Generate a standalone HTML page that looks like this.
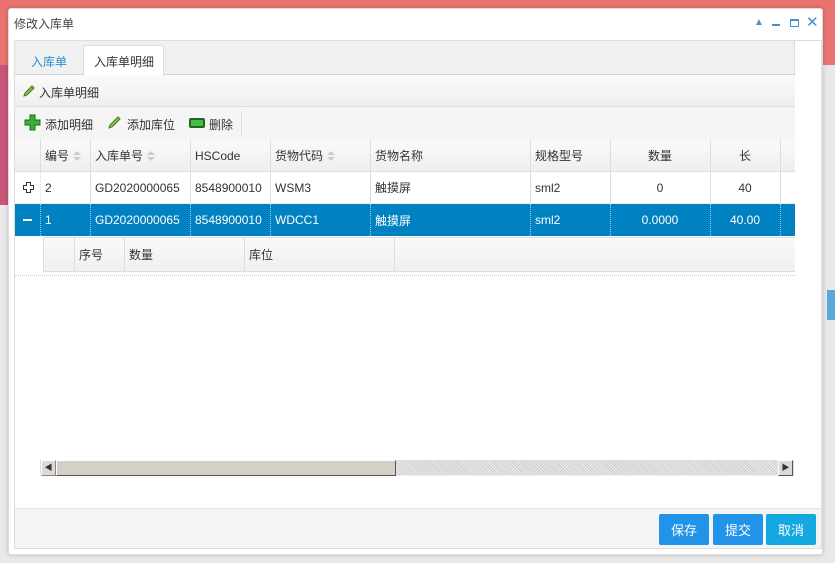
<!DOCTYPE html>
<html><head><meta charset="utf-8"><style>
*{box-sizing:border-box;margin:0;padding:0}
body{width:835px;height:563px;overflow:hidden;position:relative;background:#e9e9e9;font-family:"Liberation Sans","Noto Sans CJK SC",sans-serif;font-size:12px;color:#333}
.abs{position:absolute}
.hd{background:linear-gradient(#fafafa,#efefef)}
.cell{position:absolute;top:0;height:100%;border-right:1px solid #ddd;padding-left:5px;display:flex;align-items:center}
.sel .cell{border-right:1px dotted #9cc8e6;color:#fff}
.sort{display:inline-block;margin-left:4px;width:8px;height:10px;position:relative}
.sort:before,.sort:after{content:"";position:absolute;left:0;border-left:4px solid transparent;border-right:4px solid transparent}
.sort:before{top:0;border-bottom:4px solid #ccc}
.sort:after{top:6px;border-top:4px solid #ccc}
.btn{position:absolute;top:514px;width:50px;height:31px;color:#fff;font-size:13px;display:flex;align-items:center;justify-content:center;border-radius:2px}
</style></head><body>
<div class="abs" style="left:0;top:0;width:835px;height:65px;background:#e8736f"></div>
<div class="abs" style="left:0;top:65px;width:8px;height:140px;background:#c9567a"></div>
<div class="abs" style="left:827px;top:290px;width:8px;height:30px;background:#5aa7d8"></div>
<!-- dialog -->
<div class="abs" style="left:8px;top:8px;width:815px;height:547px;background:#fff;border:1px solid #ddd;border-radius:3px;box-shadow:0 0 4px rgba(0,0,0,.2)"></div>
<div class="abs" style="left:14px;top:15px;font-size:12px;color:#444">修改入库单</div>
<div class="abs" style="left:754px;top:17px;color:#4a90c8;font-size:10px">▲</div>
<div class="abs" style="left:772px;top:24px;width:8px;height:2px;background:#4a90c8"></div>
<div class="abs" style="left:790px;top:19px;width:9px;height:8px;border:1px solid #4a90c8;border-top-width:2px"></div>
<div class="abs" style="left:806px;top:13px;color:#4a90c8;font-size:15px">✕</div>
<!-- panel -->
<div class="abs" style="left:14px;top:40px;width:808px;height:509px;border:1px solid #ddd;background:#fff"></div>
<div class="abs" style="left:15px;top:41px;width:780px;height:34px;background:#f0f0f0;border-bottom:1px solid #d4d4d4;border-right:1px solid #ddd"></div>
<div class="abs" style="left:31px;top:53px;color:#2a8fd0">入库单</div>
<div class="abs" style="left:83px;top:45px;width:81px;height:31px;background:#fff;border:1px solid #ddd;border-bottom:none;border-radius:3px 3px 0 0;padding:7px 0 0 10px;color:#333">入库单明细</div>
<div class="abs hd" style="left:15px;top:76px;width:780px;height:31px;border-bottom:1px solid #ddd"></div>
<svg class="abs" style="left:22px;top:84px" width="14" height="14"><path d="M2 12 L3 9 L10 2 L12 4 L5 11 Z" fill="#8bc34a" stroke="#3a7a1a"/></svg>
<div class="abs" style="left:39px;top:84px">入库单明细</div>
<div class="abs" style="left:15px;top:107px;width:780px;height:33px;background:#f5f5f5"></div>
<svg class="abs" style="left:24px;top:114px" width="17" height="17"><path d="M6 1h5v5h5v5h-5v5h-5v-5h-5v-5h5z" fill="#3cb034" stroke="#1d6b1a"/></svg>
<div class="abs" style="left:45px;top:116px">添加明细</div>
<svg class="abs" style="left:107px;top:115px" width="15" height="15"><path d="M2 13 L3 10 L11 2 L13 4 L5 12 Z" fill="#8bc34a" stroke="#3a7a1a"/></svg>
<div class="abs" style="left:127px;top:116px">添加库位</div>
<div class="abs" style="left:189px;top:118px;width:16px;height:10px;border:2px solid #1d6b1a;border-radius:2px;background:#4cb848"></div>
<div class="abs" style="left:209px;top:116px">删除</div>
<div class="abs" style="left:241px;top:111px;width:1px;height:25px;background:#ddd"></div>
<!-- grid header -->
<div class="abs hd" style="left:15px;top:140px;width:780px;height:32px;border-bottom:1px solid #ddd">
<div class="cell" style="left:0;width:26px"></div>
<div class="cell" style="left:25px;width:51px">编号<span class="sort"></span></div>
<div class="cell" style="left:75px;width:101px">入库单号<span class="sort"></span></div>
<div class="cell" style="left:175px;width:81px">HSCode</div>
<div class="cell" style="left:255px;width:101px">货物代码<span class="sort"></span></div>
<div class="cell" style="left:355px;width:161px">货物名称</div>
<div class="cell" style="left:515px;width:81px">规格型号</div>
<div class="cell" style="left:595px;width:101px;justify-content:center;padding:0">数量</div>
<div class="cell" style="left:695px;width:71px;justify-content:center;padding:0">长</div>
</div>
<div class="abs" style="left:15px;top:172px;width:780px;height:32px;background:#fff;border-bottom:1px solid #eee">
<div class="cell" style="left:0;width:26px;padding-left:8px;border-right:1px dotted #ddd"><svg width="11" height="11"><path d="M3.5 0.5h4v3h3v4h-3v3h-4v-3h-3v-4h3z" fill="none" stroke="#333"/></svg></div>
<div class="cell" style="left:25px;width:51px">2</div>
<div class="cell" style="left:75px;width:101px">GD2020000065</div>
<div class="cell" style="left:175px;width:81px">8548900010</div>
<div class="cell" style="left:255px;width:101px">WSM3</div>
<div class="cell" style="left:355px;width:161px">触摸屏</div>
<div class="cell" style="left:515px;width:81px">sml2</div>
<div class="cell" style="left:595px;width:101px;justify-content:center;padding:0">0</div>
<div class="cell" style="left:695px;width:71px;justify-content:center;padding:0">40</div>
</div>
<div class="abs sel" style="left:15px;top:204px;width:780px;height:32px;background:#0081c2">
<div class="cell" style="left:0;width:26px;padding-left:8px"><span style="display:inline-block;width:9px;height:2px;background:#fff"></span></div>
<div class="cell" style="left:25px;width:51px">1</div>
<div class="cell" style="left:75px;width:101px">GD2020000065</div>
<div class="cell" style="left:175px;width:81px">8548900010</div>
<div class="cell" style="left:255px;width:101px">WDCC1</div>
<div class="cell" style="left:355px;width:161px">触摸屏</div>
<div class="cell" style="left:515px;width:81px">sml2</div>
<div class="cell" style="left:595px;width:101px;justify-content:center;padding:0">0.0000</div>
<div class="cell" style="left:695px;width:71px;justify-content:center;padding:0">40.00</div>
</div>
<div class="abs hd" style="left:43px;top:237px;width:752px;height:35px;border:1px solid #ddd;border-right:none">
<div class="cell" style="left:0;width:31px"></div>
<div class="cell" style="left:30px;width:51px">序号</div>
<div class="cell" style="left:80px;width:121px">数量</div>
<div class="cell" style="left:200px;width:151px">库位</div>
</div>
<div class="abs" style="left:15px;top:275px;width:780px;border-top:1px dotted #ccc"></div>
<!-- scrollbar -->
<div class="abs" style="left:40px;top:460px;width:754px;height:16px;background:repeating-linear-gradient(45deg,#ccc 0 1px,#eee 1px 2px);border-bottom:1px solid #eee"></div>
<div class="abs" style="left:41px;top:460px;width:15px;height:16px;background:#ddd9d4;border:1px solid #888;border-top-color:#fff;border-left-color:#fff;font-size:8px;line-height:14px;text-align:center">◀</div>
<div class="abs" style="left:56px;top:460px;width:340px;height:16px;background:#d4d0c8;border:1px solid #555;border-top-color:#fff;border-left-color:#fff"></div>
<div class="abs" style="left:778px;top:460px;width:15px;height:16px;background:#ddd9d4;border:1px solid #555;border-top-color:#fff;border-left-color:#fff;font-size:8px;line-height:14px;text-align:center">▶</div>
<!-- footer -->
<div class="abs" style="left:15px;top:508px;width:806px;height:40px;background:#f4f4f4;border-top:1px solid #e6e6e6"></div>
<div class="btn" style="left:659px;background:#2193e8">保存</div>
<div class="btn" style="left:713px;background:#2193e8">提交</div>
<div class="btn" style="left:766px;background:#13a8e0">取消</div>
</body></html>
